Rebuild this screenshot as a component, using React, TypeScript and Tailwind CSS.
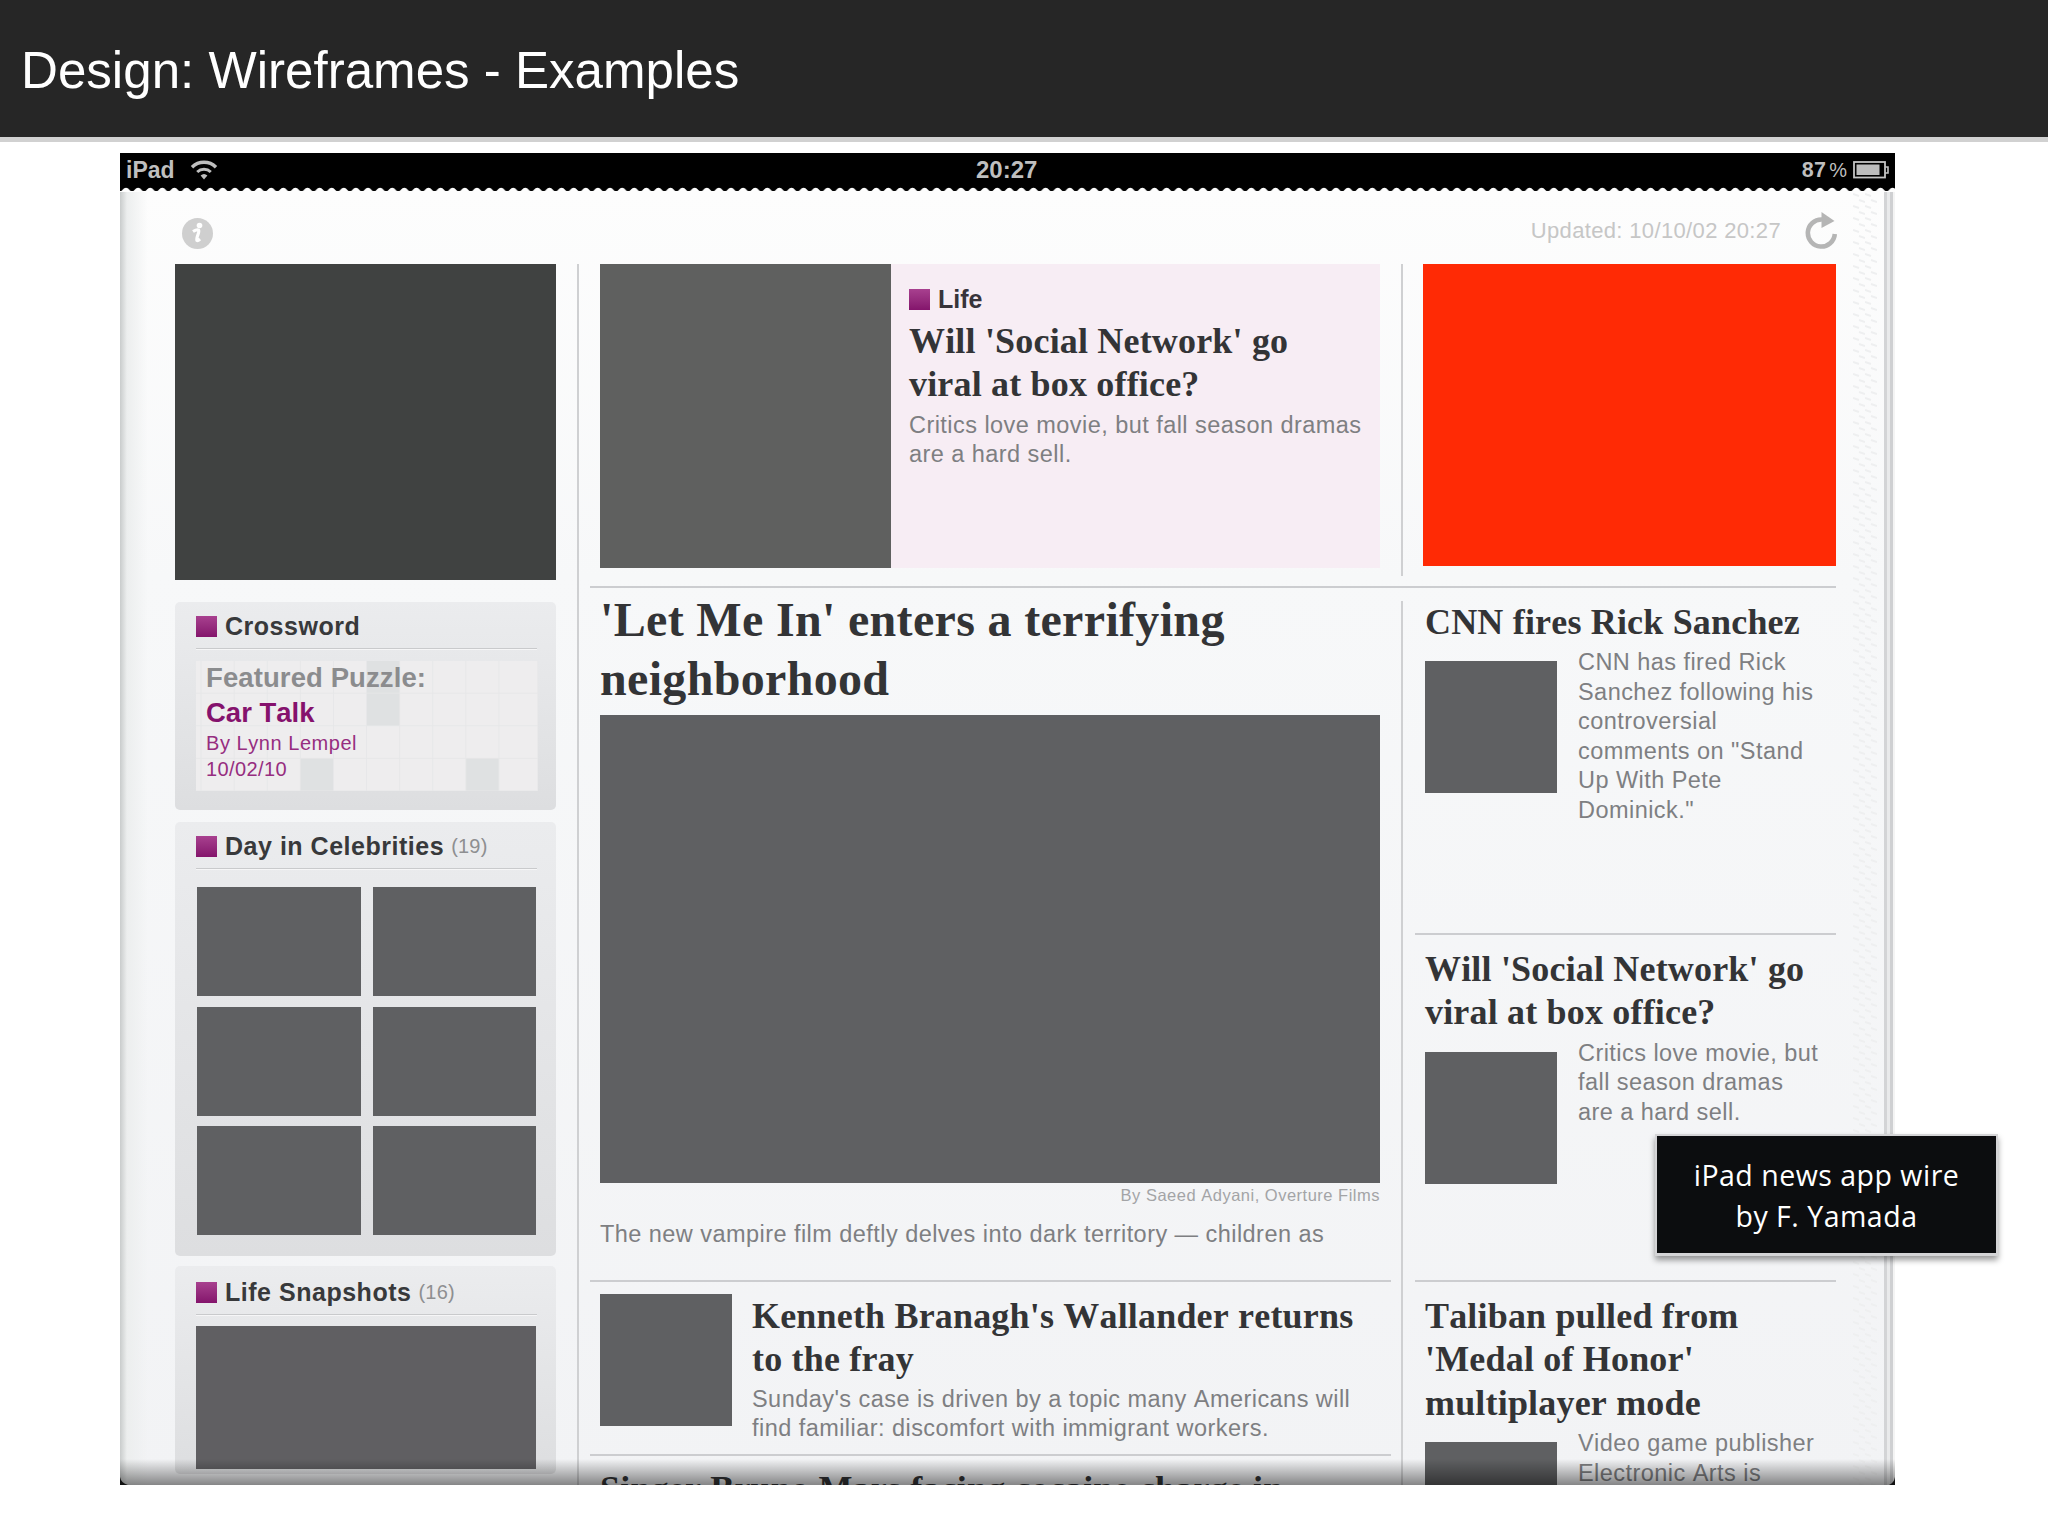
import React from 'react';

const headline = "font-['Liberation_Serif',serif] font-bold text-[36px] leading-[43.4px] tracking-[0.18px] text-[#333436] whitespace-pre";
const body = "text-[23.5px] leading-[29.5px] tracking-[0.45px] text-[#7e7f82] whitespace-pre";

function Marker() {
  return <div className="w-[21px] h-[21px] shrink-0 bg-linear-to-b from-[#a8408f] to-[#84146c]" />;
}

function Rule({ className = '' }: { className?: string }) {
  return <div className={`h-[2px] bg-[#cccdd0] ${className}`} />;
}

function CardTitle({ title, count }: { title: string; count?: string }) {
  return (
    <>
      <div className="flex items-center h-[26px] -mt-[1px]">
        <Marker />
        <h3 className="ml-[8px] text-[25px] leading-[26px] tracking-[0.52px] font-bold text-[#38393b]">{title}</h3>
        {count && <span className="ml-[7px] text-[20px] leading-[26px] tracking-[0.2px] text-[#8e8f91]">({count})</span>}
      </div>
      <div className="h-[2px] mt-[9px] w-[341px] bg-[#c9cacc] border-b border-[#f6f6f7]" />
    </>
  );
}

const darkCells = ['0-5', '1-5', '3-3', '3-8'];

function Crossword() {
  return (
    <div className="relative w-[342px] h-[130px] mt-[11px] bg-[#e6e7e8]">
      <svg width="342" height="130" className="absolute inset-0">
        {[0, 1, 2, 3].map((r) =>
          Array.from({ length: 11 }, (_, c) => (
            <rect
              key={`${r}-${c}`}
              x={c === 0 ? 0 : 5.5 + (c - 1) * 33.1}
              y={r * 32.6}
              width={c === 0 ? 4.5 : c === 10 ? 38 : 32.2}
              height={31.7}
              fill={darkCells.includes(`${r}-${c - 1}`) ? '#dfe1e2' : '#eeedee'}
            />
          )),
        )}
      </svg>
      <div className="relative pl-[10px] -top-[1px]">
        <p className="text-[27.5px] leading-[35px] tracking-[0.1px] font-bold text-[#8b8c8e]">Featured Puzzle:</p>
        <p className="text-[27.5px] leading-[35px] font-bold text-[#85126d]">Car Talk</p>
        <p className="text-[20px] leading-[26px] tracking-[0.55px] text-[#962d80]">By Lynn Lempel</p>
        <p className="text-[20px] leading-[26px] tracking-[0.4px] text-[#962d80]">10/02/10</p>
      </div>
    </div>
  );
}

function StatusBar() {
  return (
    <div className="relative h-[38px] flex items-center justify-between pl-[6px] pr-[6px] pb-[5px] text-[#bfbfbf] font-bold">
      <div className="flex items-center">
        <span className="text-[23px] leading-[30px]">iPad</span>
        <svg width="28" height="22" viewBox="0 0 28 22" className="ml-[15px]" fill="none" stroke="#bfbfbf">
          <path d="M2 8.2a17 17 0 0 1 24 0" strokeWidth="3.4" />
          <path d="M7.2 13a10 10 0 0 1 13.6 0" strokeWidth="3" />
          <path d="M10.6 16.6a5 5 0 0 1 6.8 0L14 20.5z" fill="#bfbfbf" stroke="none" />
        </svg>
      </div>
      <span className="absolute left-[856px] text-[24px] leading-[30px]">20:27</span>
      <div className="flex items-center">
        <span className="text-[21.5px] leading-[30px] tracking-[0.3px]">87</span>
        <span className="ml-[3px] text-[20px] leading-[30px] font-normal">%</span>
        <svg width="36" height="18" viewBox="0 0 36 18" className="ml-[6px]">
          <rect x="1" y="1" width="31" height="15.5" fill="none" stroke="#c4c4c4" strokeWidth="1.8" />
          <rect x="3.5" y="3.5" width="23" height="10.5" fill="#bdbdbd" />
          <path d="M32 6h3v6h-3" fill="none" stroke="#c4c4c4" strokeWidth="1.6" />
        </svg>
      </div>
    </div>
  );
}

function Scallops() {
  return (
    <svg width="1775" height="8" className="absolute left-0 top-[34px]">
      <defs>
        <pattern id="scallop" width="12.1" height="8" patternUnits="userSpaceOnUse">
          <path d="M0 4.5C2.5 4.5 3 0.8 6 0.8S9.6 4.5 12.1 4.5V8H0z" fill="#fdfdfd" />
        </pattern>
      </defs>
      <rect width="1775" height="8" fill="url(#scallop)" />
    </svg>
  );
}

function PageEdges() {
  return (
    <>
      <div className="absolute left-0 top-[39px] bottom-0 w-[28px] bg-linear-to-r from-[#c9cccc] via-[#eceeee] via-25% to-transparent" />
      <svg width="42" height="1293" className="absolute right-0 top-[39px]">
        <defs>
          <pattern id="weave" width="12" height="12" patternUnits="userSpaceOnUse">
            <path d="M0 2l6 2M6 8l6 2" stroke="#eeeff0" strokeWidth="2" />
          </pattern>
        </defs>
        <rect width="24" height="1293" fill="url(#weave)" />
        <rect x="31" width="3" height="1293" fill="#d3d4d6" />
        <rect x="34" width="3" height="1293" fill="#e9eaeb" />
        <rect x="37" width="3" height="1293" fill="#cfd0d2" />
        <rect x="40" width="2" height="1293" fill="#f4f4f4" />
      </svg>
      <div className="absolute inset-x-0 bottom-0 h-[26px] bg-linear-to-b from-transparent to-black/45" />
      <svg width="1775" height="8" className="absolute left-0 bottom-0">
        <path d="M0 0Q1 6 8 8H0zM1775 0Q1774 6 1769 8H1775z" fill="#111" />
      </svg>
    </>
  );
}

function SideStory({ lines, text }: { lines: string; text: string }) {
  return (
    <div className="pl-[10px]">
      <h2 className={headline}>{lines}</h2>
      <div className="flex gap-[21px]">
        <div className="w-[132px] h-[132px] mt-[17px] bg-[#5f6062] shrink-0" />
        <p className={`${body} mt-[4px]`}>{text}</p>
      </div>
    </div>
  );
}

function LeftColumn() {
  const card = 'w-[381px] px-[21px] rounded-[5px] bg-linear-to-b from-[#ebecee] to-[#dddee0]';
  return (
    <div className="w-[381px] shrink-0">
      <div className="h-[316px] bg-[#404241]" />
      <div className={`${card} mt-[22px] h-[208px] pt-[12px]`}>
        <CardTitle title="Crossword" />
        <Crossword />
      </div>
      <div className={`${card} mt-[12px] h-[434px] pt-[12px]`}>
        <CardTitle title="Day in Celebrities" count="19" />
        <div className="grid grid-cols-2 gap-x-[12px] gap-y-[10.5px] mt-[17px] ml-[1px] w-[339px]">
          {[1, 2, 3, 4, 5, 6].map((n) => (
            <div key={n} className="h-[109px] bg-[#5f6062]" />
          ))}
        </div>
      </div>
      <div className={`${card} mt-[10px] h-[208px] pt-[14px]`}>
        <CardTitle title="Life Snapshots" count="16" />
        <div className="w-[340px] h-[143px] mt-[10px] bg-[#605f62]" />
      </div>
    </div>
  );
}

function MainColumn() {
  return (
    <div className="w-[801px] mt-[1px]">
      <div className="pl-[10px] h-[691px]">
        <h1 className="h-[126px] pt-[1px] font-['Liberation_Serif',serif] font-bold text-[48px] leading-[59.3px] tracking-[0.33px] text-[#333436] whitespace-pre">
          {"'Let Me In' enters a terrifying\nneighborhood"}
        </h1>
        <div className="w-[780px] h-[468px] bg-[#5f6062]" />
        <p className="w-[780px] text-right text-[16.5px] leading-[24px] tracking-[0.5px] text-[#a3a4a6]">By Saeed Adyani, Overture Films</p>
        <p className={`${body} mt-[13px] tracking-[0.5px]`}>The new vampire film deftly delves into dark territory — children as</p>
      </div>
      <Rule />
      <div className="flex pl-[10px] h-[172px]">
        <div className="w-[132px] h-[132px] mt-[12px] bg-[#5f6062] shrink-0" />
        <div className="ml-[20px] mt-[13px]">
          <h2 className={headline}>{"Kenneth Branagh's Wallander returns\nto the fray"}</h2>
          <p className={`${body} mt-[3px]`}>{"Sunday's case is driven by a topic many Americans will\nfind familiar: discomfort with immigrant workers."}</p>
        </div>
      </div>
      <Rule />
      <h2 className={`${headline} pl-[10px] mt-[12px]`}>Singer Bruno Mars facing cocaine charge in</h2>
    </div>
  );
}

export default function App() {
  return (
    <div className="relative w-[2048px] h-[1536px] overflow-hidden bg-white font-['Liberation_Sans',Arial,sans-serif]">
      <header className="h-[142px] bg-[#262626] border-b-[5px] border-[#d1d1d1] pl-[21px]">
        <h1 className="text-[51.1px] leading-[141px] text-white">Design: Wireframes - Examples</h1>
      </header>

      <main className="relative ml-[120px] mt-[11px] w-[1775px] h-[1332px] overflow-hidden bg-black [font-kerning:none]">
        <StatusBar />
        <div className="h-[1294px] bg-linear-to-b from-[#fdfdfd] via-[#f7f8f9] via-30% to-[#f2f3f5]">
          <div className="h-[73px] flex items-center justify-between pl-[62px] pr-[56px] pt-[6px]">
            <svg width="31" height="31" viewBox="0 0 31 31" className="mt-[5px]">
              <circle cx="15.5" cy="15.5" r="15.5" fill="#cfcfcf" />
              <circle cx="17.5" cy="7.5" r="2.8" fill="#fff" />
              <path d="M11 13.5q4-2.5 5.5-1.5 .8 1-.5 4.500-1.800 5-1 6 .8.500 3-1.500" fill="none" stroke="#fff" strokeWidth="3.2" />
            </svg>
            <div className="flex items-center">
              <span className="mt-[1px] text-[22px] leading-[30px] tracking-[0.35px] text-[#c6c6c6]">Updated: 10/10/02 20:27</span>
              <svg width="34" height="37" viewBox="0 0 34 37" className="ml-[24px]">
                <path d="M17 7.5A13.5 13.5 0 1 0 29.800 22" fill="none" stroke="#b5b5b5" strokeWidth="4.6" />
                <path d="M16.5 0L29.500 9L16.5 16z" fill="#b5b5b5" />
              </svg>
            </div>
          </div>

          <div className="flex pl-[55px]">
            <LeftColumn />
            <div className="w-[2px] h-[1221px] ml-[21px] bg-[#cfd0d2]" />
            <div className="ml-[11px]">
              <div className="flex h-[322px] pl-[10px]">
                <div className="w-[291px] h-[304px] bg-[#5f605f]" />
                <div className="w-[489px] h-[304px] bg-[#f7edf4] pl-[18px] pt-[22px]">
                  <div className="flex items-center h-[26px]">
                    <Marker />
                    <h3 className="ml-[8px] text-[25px] leading-[26px] font-bold text-[#38343a]">Life</h3>
                  </div>
                  <h2 className={`${headline} mt-[8px]`}>{"Will 'Social Network' go\nviral at box office?"}</h2>
                  <p className={`${body} mt-[4px]`}>{'Critics love movie, but fall season dramas\nare a hard sell.'}</p>
                </div>
                <div className="w-[2px] h-[312px] ml-[21px] bg-[#cfd0d2]" />
                <div className="w-[413px] h-[302px] ml-[20px] bg-[#ff2a05]" />
              </div>
              <Rule className="w-[1246px]" />
              <div className="flex">
                <MainColumn />
                <div className="w-[2px] h-[884px] mt-[13px] ml-[10px] bg-[#cfd0d2]" />
                <div className="w-[421px] ml-[12px]">
                  <div className="pt-[13px] h-[345px]">
                    <SideStory lines="CNN fires Rick Sanchez" text={'CNN has fired Rick\nSanchez following his\ncontroversial\ncomments on "Stand\nUp With Pete\nDominick."'} />
                  </div>
                  <Rule />
                  <div className="pt-[13px] h-[345px]">
                    <SideStory lines={"Will 'Social Network' go\nviral at box office?"} text={'Critics love movie, but\nfall season dramas\nare a hard sell.'} />
                  </div>
                  <Rule />
                  <div className="pt-[13px]">
                    <SideStory lines={"Taliban pulled from\n'Medal of Honor'\nmultiplayer mode"} text={'Video game publisher\nElectronic Arts is'} />
                  </div>
                </div>
              </div>
            </div>
          </div>
        </div>
        <Scallops />
        <PageEdges />
      </main>

      <div className="absolute left-[1655px] top-[1134px] w-[343px] h-[122px] border-2 border-b-[3px] border-[#d4d4d6] bg-[#0c0d0f] shadow-[0_4px_6px_rgba(0,0,0,0.4)] pt-[19px] text-center">
        <p className="font-['Open_Sans','Noto_Sans',sans-serif] text-[28.5px] leading-[41px] tracking-[0.5px] text-white whitespace-pre">{'iPad news app wire\nby F. Yamada'}</p>
      </div>
    </div>
  );
}
